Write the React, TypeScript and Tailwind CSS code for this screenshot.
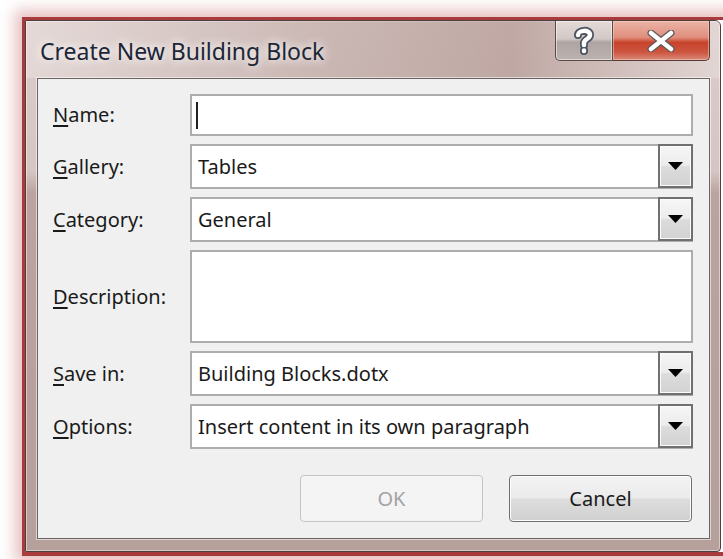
import React from 'react';

const uiFont = { fontFamily: '"Noto Sans", "Open Sans", sans-serif' };

const Label = ({ hot, rest }: { hot: string; rest: string }) => (
  <div className="w-[137px] shrink-0 text-[20px] text-[#1a1a1a]">
    <u className="underline-offset-[3px]">{hot}</u>
    {rest}
  </div>
);

const DropArrow = () => (
  <div className="-mt-[2px] -mr-[2px] flex h-[44px] w-[35px] shrink-0 items-center justify-center border-2 border-[#707070] bg-[linear-gradient(to_bottom,#f6f6f6_0%,#ececec_48%,#dcdcdc_52%,#d2d2d2_100%)] shadow-[inset_0_0_0_1px_#fbfbfb]">
    <svg width="15" height="8" viewBox="0 0 15 8">
      <path d="M0 0 H15 L7.5 8 Z" fill="#000" />
    </svg>
  </div>
);

const Combo = ({ value }: { value: string }) => (
  <div className="flex h-[45px] flex-1 items-center border-2 border-[#adadad] bg-white">
    <div className="flex-1 pl-[6px] text-[20px] text-[#1a1a1a]">{value}</div>
    <DropArrow />
  </div>
);

const Row = ({ children }: { children: React.ReactNode }) => (
  <div className="flex items-center">{children}</div>
);

export default function App() {
  return (
    <div className="h-[559px] w-[723px] overflow-hidden bg-white pl-[22px] pt-[17px]" style={uiFont}>
      {/* red outer border with soft glow */}
      <div className="h-[539px] w-[710px] border-b-[4px] border-l-[3px] border-t-[3px] border-[#a83c3c] shadow-[0_0_14px_7px_rgba(205,130,130,0.5)]">
        {/* glass window frame */}
        <div className="flex h-[532px] w-[696px] flex-col rounded-tr-[6px] rounded-br-[4px] border border-[#4e3e3c] bg-[linear-gradient(to_bottom,#dccdca_0px,#d6c6c3_150px,#bba39f_172px,#b6a09c_100%)] pb-[12px] pl-[11px] pr-[10px] shadow-[inset_0_0_0_1px_rgba(255,255,255,0.45)]">
          {/* title bar */}
          <div className="-ml-[11px] -mr-[10px] flex h-[57px] shrink-0 items-start bg-[linear-gradient(to_right,rgba(255,255,255,0.25)_0%,rgba(160,130,125,0.3)_45%,rgba(150,115,110,0.4)_70%,rgba(255,255,255,0.2)_100%)] pl-[14px] pr-[10px]">
            <div className="mt-[13px] flex-1 text-[23px] text-[#1b2636] [text-shadow:0_0_8px_rgba(255,255,255,0.95),0_0_14px_rgba(255,255,255,0.8)]">
              Create New Building Block
            </div>
            <div className="flex h-[40px]">
              <div className="flex w-[58px] items-center justify-center rounded-bl-[5px] border border-t-0 border-[#5a4a48] bg-[linear-gradient(to_bottom,#e4dbd9_0%,#d2c8c6_46%,#aea4a2_54%,#bcb3b1_100%)] shadow-[inset_0_0_0_1px_rgba(255,255,255,0.5)]">
                {/* help icon */}
                <svg width="24" height="30" viewBox="0 0 24 30">
                  <path d="M6 9 C6 4 18 3 18 9 C18 13 12 13 12 17 V19 M12 24.5 V25" fill="none" stroke="#4b5361" strokeWidth="8" strokeLinecap="round" strokeLinejoin="round" />
                  <path d="M6 9 C6 4 18 3 18 9 C18 13 12 13 12 17 V19 M12 24.5 V25" fill="none" stroke="#fff" strokeWidth="4.5" strokeLinecap="round" strokeLinejoin="round" />
                </svg>
              </div>
              <div className="flex w-[97px] items-center justify-center rounded-br-[5px] border border-l-0 border-t-0 border-[#5a3a34] bg-[linear-gradient(to_bottom,#ebb4a7_0%,#df8e7c_42%,#c8432c_55%,#cd553f_80%,#d98a7a_100%)] shadow-[inset_0_0_0_1px_rgba(255,220,210,0.45)]">
                <svg width="28" height="22" viewBox="0 0 28 22">
                  <path d="M4 3 L24 19 M24 3 L4 19" stroke="#5c5a5c" strokeWidth="7" strokeLinecap="round" />
                  <path d="M4 3 L24 19 M24 3 L4 19" stroke="#fff" strokeWidth="4.5" strokeLinecap="round" />
                </svg>
              </div>
            </div>
          </div>

          {/* client area */}
          <div className="flex flex-1 flex-col border border-[#6a6464] bg-[#f0f0f0] pb-[16px] pl-[15px] pr-[16px] pt-[15px] shadow-[0_0_0_1px_rgba(255,255,255,0.55)]">
            <div className="flex flex-col gap-[8px]">
              <Row>
                <Label hot="N" rest="ame:" />
                <div className="flex h-[42px] flex-1 items-center border-2 border-[#adadad] bg-white pl-[4px]">
                  <div className="h-[27px] w-[2px] bg-[#222]" />
                </div>
              </Row>
              <Row>
                <Label hot="G" rest="allery:" />
                <Combo value="Tables" />
              </Row>
              <Row>
                <Label hot="C" rest="ategory:" />
                <Combo value="General" />
              </Row>
              <Row>
                <Label hot="D" rest="escription:" />
                <div className="h-[93px] flex-1 border-2 border-[#adadad] bg-white" />
              </Row>
              <Row>
                <Label hot="S" rest="ave in:" />
                <Combo value="Building Blocks.dotx" />
              </Row>
              <Row>
                <Label hot="O" rest="ptions:" />
                <Combo value="Insert content in its own paragraph" />
              </Row>
            </div>

            <div className="mt-auto flex justify-end gap-[26px] pr-[1px]">
              <button className="h-[47px] w-[183px] rounded-[4px] border border-[#c4c4c4] bg-[#f4f4f4] text-[20px] text-[#a3a3a3]">
                OK
              </button>
              <button className="h-[47px] w-[183px] rounded-[4px] border border-[#707070] bg-[linear-gradient(to_bottom,#f3f3f3_0%,#ebebeb_48%,#dddddd_52%,#d0d0d0_100%)] text-[20px] text-[#1a1a1a] shadow-[inset_0_0_0_1px_#fcfcfc]">
                Cancel
              </button>
            </div>
          </div>
        </div>
      </div>
    </div>
  );
}
